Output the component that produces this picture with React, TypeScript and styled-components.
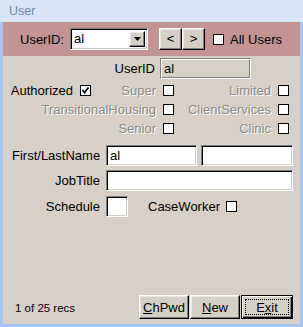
import React from "react";
import styled, { createGlobalStyle, css } from "styled-components";

const Global = createGlobalStyle`
  html, body { margin: 0; padding: 0; }
  body { font-family: "Liberation Sans", Arial, sans-serif; font-size: 13px; color: #000; }
  * { box-sizing: border-box; }
`;

const Window = styled.div`
  width: 303px;
  height: 327px;
  display: flex;
  flex-direction: column;
  background: #a9c4ee;
  padding: 0 3px 3px 3px;
`;

const TitleBar = styled.div`
  height: 22px;
  margin: 0 -3px;
  padding-left: 9px;
  display: flex;
  align-items: center;
  background: #d9e4f5;
  color: #7487a4;
  font-size: 12.5px;
`;

const HeaderBand = styled.div`
  height: 34px;
  display: flex;
  align-items: center;
  padding-left: 17px;
  background: #c29594;
`;

const Label = styled.span<{ $disabled?: boolean }>`
  white-space: nowrap;
  line-height: 15px;
  ${(p) =>
    p.$disabled &&
    css`
      color: #8d8b87;
      text-shadow: 1px 1px 0 #ffffff;
    `}
`;

const Combo = styled.div`
  margin-left: 6px;
  width: 78px;
  height: 22px;
  display: flex;
  background: #fff;
  border: 1px solid;
  border-color: #808080 #fff #fff #808080;
  box-shadow: inset 1px 1px 0 #000, inset -1px -1px 0 #d4d0c8;
  padding: 2px;
`;

const ComboText = styled.div`
  flex: 1;
  padding-left: 1px;
  line-height: 16px;
`;

const raised = css`
  background: #d4d0c8;
  border: 1px solid;
  border-color: #fff #000 #000 #fff;
  box-shadow: inset -1px -1px 0 #808080, inset 1px 1px 0 #e8e6e2;
`;

const ComboButton = styled.div`
  width: 16px;
  height: 16px;
  ${raised}
  display: flex;
  align-items: center;
  justify-content: center;
`;

const NavGroup = styled.div`
  margin-left: 11px;
  display: flex;
`;

const NavButton = styled.div`
  width: 23px;
  height: 22px;
  ${raised}
  display: flex;
  align-items: center;
  justify-content: center;
  font-size: 13px;
  padding-bottom: 1px;
`;

const Box = styled.div<{ $ml?: number }>`
  width: 11px;
  height: 11px;
  flex: none;
  background: #fff;
  border: 1px solid #000;
  margin-left: ${(p) => p.$ml ?? 0}px;
  display: flex;
  align-items: center;
  justify-content: center;
`;

const Body = styled.div`
  flex: 1;
  display: flex;
  flex-direction: column;
  background: #d6d0c9;
  padding: 2px 7px 5px 9px;
`;

const Row = styled.div<{ $mt?: number }>`
  display: flex;
  align-items: center;
  margin-top: ${(p) => p.$mt ?? 0}px;
`;

const LabelCell = styled.div<{ $w: number; $gap: number }>`
  width: ${(p) => p.$w}px;
  margin-right: ${(p) => p.$gap}px;
  text-align: right;
  white-space: nowrap;
`;

const Field = styled.div<{ $w: number; $h?: number; $ml?: number }>`
  width: ${(p) => p.$w}px;
  height: ${(p) => p.$h ?? 21}px;
  margin-left: ${(p) => p.$ml ?? 0}px;
  background: #fff;
  border: 1px solid;
  border-color: #808080 #fff #fff #808080;
  box-shadow: inset 1px 1px 0 #000, inset -1px -1px 0 #d4d0c8;
  padding: 2px 3px;
  line-height: 16px;
`;

const LockedField = styled.div<{ $w: number }>`
  width: ${(p) => p.$w}px;
  height: 21px;
  background: #d6d0c9;
  border: 1px solid;
  border-color: #808080 #fff #fff #808080;
  box-shadow: inset 1px 1px 0 #ffffff, inset -1px -1px 0 #808080;
  padding: 2px 3px;
  line-height: 16px;
`;

const CheckGrid = styled.div`
  margin-top: 2px;
  display: grid;
  grid-template-columns: 79px 83px 115px;
  grid-auto-rows: 19px;
`;

const CheckCell = styled.div<{ $span?: string }>`
  grid-column: ${(p) => p.$span ?? "auto"};
  display: flex;
  align-items: center;
  justify-content: flex-end;
  gap: 7px;
`;

const Spacer = styled.div`
  flex: 1;
`;

const Footer = styled.div`
  display: flex;
  align-items: center;
  gap: 1px;
`;

const RecCount = styled.div`
  font-size: 11.5px;
  padding-left: 3px;
  margin-right: auto;
  padding-top: 2px;
`;

const CmdButton = styled.div<{ $w: number; $default?: boolean }>`
  width: ${(p) => p.$w}px;
  height: 24px;
  ${raised}
  display: flex;
  align-items: center;
  justify-content: center;
  position: relative;
  ${(p) =>
    p.$default &&
    css`
      border: 1px solid #000;
      box-shadow: inset 1px 1px 0 #fff, inset -1px -1px 0 #000, inset -2px -2px 0 #808080;
      &::after {
        content: "";
        position: absolute;
        inset: 3px;
        border: 1px dotted #000;
      }
    `}
`;

const U = styled.span`
  text-decoration: underline;
`;

const Check = () => (
  <svg width="9" height="9" viewBox="0 0 9 9">
    <polyline points="1.5,4 3.5,6.5 7.5,1.5" fill="none" stroke="#000" strokeWidth="1.8" />
  </svg>
);

export default function App() {
  return (
    <>
      <Global />
      <Window>
        <TitleBar>User</TitleBar>
        <HeaderBand>
          <Label>UserID:</Label>
          <Combo>
            <ComboText>al</ComboText>
            <ComboButton>
              <svg width="7" height="4" viewBox="0 0 7 4">
                <polygon points="0,0 7,0 3.5,4" fill="#000" />
              </svg>
            </ComboButton>
          </Combo>
          <NavGroup>
            <NavButton>&lt;</NavButton>
            <NavButton>&gt;</NavButton>
          </NavGroup>
          <Box $ml={8} />
          <Label style={{ marginLeft: 6 }}>All Users</Label>
        </HeaderBand>
        <Body>
          <Row>
            <LabelCell $w={143} $gap={5}>UserID</LabelCell>
            <LockedField $w={91}>al</LockedField>
          </Row>
          <CheckGrid>
            <CheckCell>
              <Label>Authorized</Label>
              <Box>
                <Check />
              </Box>
            </CheckCell>
            <CheckCell>
              <Label $disabled>Super</Label>
              <Box />
            </CheckCell>
            <CheckCell>
              <Label $disabled>Limited</Label>
              <Box />
            </CheckCell>
            <CheckCell $span="1 / span 2">
              <Label $disabled>TransitionalHousing</Label>
              <Box />
            </CheckCell>
            <CheckCell>
              <Label $disabled>ClientServices</Label>
              <Box />
            </CheckCell>
            <CheckCell $span="1 / span 2">
              <Label $disabled>Senior</Label>
              <Box />
            </CheckCell>
            <CheckCell>
              <Label $disabled>Clinic</Label>
              <Box />
            </CheckCell>
          </CheckGrid>
          <Row $mt={7}>
            <LabelCell $w={88} $gap={6}>First/LastName</LabelCell>
            <Field $w={91}>al</Field>
            <Field $w={92} $ml={4} />
          </Row>
          <Row $mt={4}>
            <LabelCell $w={88} $gap={6}>JobTitle</LabelCell>
            <Field $w={187} />
          </Row>
          <Row $mt={5}>
            <LabelCell $w={88} $gap={6}>Schedule</LabelCell>
            <Field $w={22} />
            <Label style={{ marginLeft: 20 }}>CaseWorker</Label>
            <Box $ml={6} />
          </Row>
          <Spacer />
          <Footer>
            <RecCount>1 of 25 recs</RecCount>
            <CmdButton $w={50}>
              <span>
                <U>C</U>hPwd
              </span>
            </CmdButton>
            <CmdButton $w={50}>
              <span>
                <U>N</U>ew
              </span>
            </CmdButton>
            <CmdButton $w={52} $default>
              <span>
                E<U>x</U>it
              </span>
            </CmdButton>
          </Footer>
        </Body>
      </Window>
    </>
  );
}
